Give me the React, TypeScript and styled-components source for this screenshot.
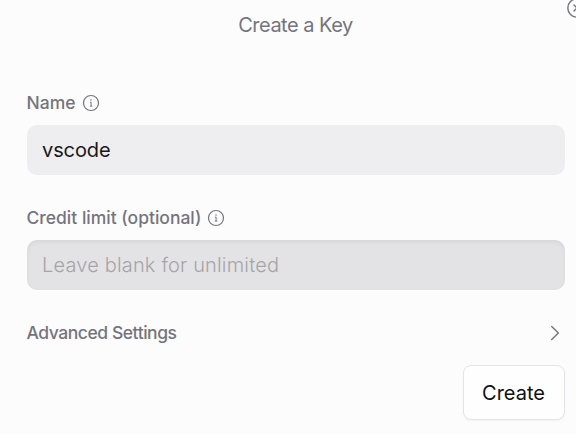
import React from "react";
import styled, { createGlobalStyle } from "styled-components";

const GlobalStyle = createGlobalStyle`
  *, *::before, *::after { box-sizing: border-box; }
  body { margin: 0; background: #fcfcfd; overflow: hidden; }
`;

const Dialog = styled.main`
  position: relative;
  width: 576px;
  height: 434px;
  padding: 10px 11px 14px 27px;
  display: flex;
  flex-direction: column;
  overflow: hidden;
  background: #fcfcfd;
  color: #74747e;
  font-family: Inter, "Liberation Sans", sans-serif;
`;

const Title = styled.h1`
  margin: 0 0 52px;
  padding-right: 1px;
  height: 30px;
  text-align: center;
  font-size: 20px;
  line-height: 30px;
  font-weight: 400;
  letter-spacing: -0.5px;
`;

const CloseButton = styled.button`
  position: absolute;
  top: -3px;
  left: 566px;
  width: 22px;
  height: 22px;
  padding: 0;
  border: 0;
  background: none;
  color: #74747e;
  svg { display: block; }
`;

const Field = styled.div`
  display: flex;
  flex-direction: column;
  gap: 11px;
  margin-bottom: 32px;
`;

const LabelRow = styled.div`
  display: flex;
  align-items: center;
  gap: 6px;
  height: 22px;
  svg { flex: none; }
`;

const Label = styled.label<{ $tracking: number }>`
  margin-left: -0.5px;
  font-size: 17.5px;
  line-height: 22px;
  font-weight: 500;
  letter-spacing: ${(p) => p.$tracking}px;
  white-space: nowrap;
`;

const Input = styled.input<{ $inset?: boolean }>`
  width: 100%;
  height: 50px;
  padding: 0 15px;
  border: 0;
  border-radius: 10px;
  outline: none;
  background: ${(p) => (p.$inset ? "#e3e3e5" : "#eeeef0")};
  box-shadow: ${(p) => (p.$inset ? "inset 0 2px 4px rgba(0, 0, 0, 0.055)" : "none")};
  color: #18181b;
  font: 400 20px Inter, "Liberation Sans", sans-serif;
  letter-spacing: -0.1px;
  &::placeholder {
    color: #a5a5a8;
    opacity: 1;
    font-weight: 300;
    letter-spacing: 0.17px;
  }
`;

const SettingsRow = styled.div`
  display: flex;
  align-items: center;
  justify-content: space-between;
  height: 22px;
  margin-bottom: 21px;
`;

const Footer = styled.footer`
  display: flex;
  justify-content: flex-end;
`;

const CreateButton = styled.button`
  width: 102px;
  height: 55px;
  padding: 0 1px 0 0;
  border: 1px solid #e4e4e7;
  border-radius: 8px;
  background: #fefefe;
  box-shadow: 0 1px 2px rgba(0, 0, 0, 0.04);
  color: #101012;
  font: 400 20px Inter, "Liberation Sans", sans-serif;
`;

const InfoIcon = () => (
  <svg width="18" height="18" viewBox="0 0 18 18" fill="none" stroke="#74747e">
    <circle cx="9" cy="9" r="7.5" strokeWidth="1.2" />
    <path d="M7.8 8.2H9.1V12M7.8 12.1H10.4" strokeWidth="1" />
    <circle cx="9" cy="5.9" r="0.75" fill="#74747e" stroke="none" />
  </svg>
);

const CloseIcon = () => (
  <svg width="22" height="22" viewBox="0 0 22 22" fill="none" stroke="currentColor" strokeWidth="1.4" strokeLinecap="round">
    <circle cx="11" cy="11" r="9.2" />
    <path d="m8 8 6 6m0-6-6 6" />
  </svg>
);

const ChevronIcon = () => (
  <svg width="20" height="20" viewBox="0 0 20 20" fill="none" stroke="#74747e" strokeWidth="1.4" strokeLinecap="round" strokeLinejoin="round">
    <path d="m6.7 3.4 6.7 6.6-6.7 6.6" />
  </svg>
);

export default function App() {
  return (
    <>
      <GlobalStyle />
      <Dialog>
        <CloseButton aria-label="Close"><CloseIcon /></CloseButton>
        <Title>Create a Key</Title>
        <Field>
          <LabelRow>
            <Label htmlFor="name" $tracking={0}>Name</Label>
            <InfoIcon />
          </LabelRow>
          <Input id="name" defaultValue="vscode" spellCheck={false} />
        </Field>
        <Field>
          <LabelRow>
            <Label htmlFor="limit" $tracking={0}>Credit limit (optional)</Label>
            <InfoIcon />
          </LabelRow>
          <Input id="limit" $inset placeholder="Leave blank for unlimited" />
        </Field>
        <SettingsRow>
          <Label as="span" $tracking={-0.45}>Advanced Settings</Label>
          <ChevronIcon />
        </SettingsRow>
        <Footer>
          <CreateButton>Create</CreateButton>
        </Footer>
      </Dialog>
    </>
  );
}
